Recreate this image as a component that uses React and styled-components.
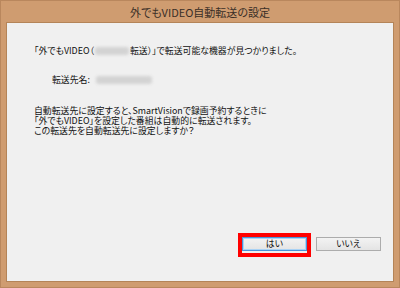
import React from "react";
import styled, { createGlobalStyle } from "styled-components";

const Global = createGlobalStyle`
  html, body { margin: 0; padding: 0; background: #cf9c70; }
  body { width: 400px; height: 288px; overflow: hidden; }
  * { box-sizing: border-box; }
`;

const Window = styled.div`
  width: 400px;
  height: 288px;
  background: #cf9c70;
  border: 1px solid #b9875d;
  display: flex;
  flex-direction: column;
  font-family: "Noto Sans CJK JP", "Noto Sans", sans-serif;
`;

const TitleBar = styled.div`
  height: 21px;
  display: flex;
  align-items: center;
  justify-content: center;
  font-size: 11px;
  color: #3a2f27;
  padding-top: 1px;
  font-feature-settings: "palt";
`;

const Client = styled.div`
  flex: 1;
  margin: 0 5px 5px 5px;
  background: #f0f0f0;
  border: 1px solid #b48458;
  display: flex;
  flex-direction: column;
  padding: 23px 12px 24px 27px;
  color: #111;
  font-size: 8.9px;
  font-feature-settings: "palt";
`;

const Line = styled.div`
  line-height: 10px;
  white-space: nowrap;
  display: flex;
  align-items: center;
  margin-left: ${(p) => p.$indent || 0}px;
  margin-top: ${(p) => p.$top || 0}px;
`;

const Paragraph = styled.div`
  margin-top: ${(p) => p.$top || 0}px;
  line-height: 10px;
  white-space: nowrap;
`;

const Blur = styled.span`
  display: inline-block;
  width: ${(p) => p.$w}px;
  height: 8px;
  background: #d3d3d3;
  filter: blur(1.4px);
  margin: 0 ${(p) => p.$gap || 0}px;
  border-radius: 3px;
`;

const Spacer = styled.div`
  flex: 1;
`;

const ButtonRow = styled.div`
  display: flex;
  justify-content: flex-end;
  align-items: flex-start;
  gap: 5px;
`;

const Highlight = styled.div`
  border: 4px solid #ff0000;
  padding: 0 0 2px 0;
  margin-top: -4px;
  display: flex;
`;

const Button = styled.button`
  width: 65px;
  height: 14px;
  padding: 0;
  margin: 0;
  font-family: "Noto Sans CJK JP", "Noto Sans", sans-serif;
  font-size: 8.9px;
  line-height: 12px;
  color: #111;
  border: 1px solid ${(p) => (p.$focused ? "#4a94d8" : "#acacac")};
  background: linear-gradient(#f3f3f3, #e4e4e4);
  box-shadow: ${(p) => (p.$focused ? "inset 0 0 0 1px #a9d2f5" : "none")};
  border-radius: 0;
  font-feature-settings: "palt";
`;

export default function App() {
  return (
    <>
      <Global />
      <Window>
        <TitleBar>外でもVIDEO自動転送の設定</TitleBar>
        <Client>
          <Line>
            「外でもVIDEO（<Blur $w={34} $gap={1} />転送）」で転送可能な機器が見つかりました。
          </Line>
          <Line $indent={18} $top={19}>
            転送先名:&nbsp;&nbsp;<Blur $w={56} $gap={2} />
          </Line>
          <Paragraph $top={21}>
            自動転送先に設定すると、SmartVisionで録画予約するときに
            <br />
            「外でもVIDEO」を設定した番組は自動的に転送されます。
            <br />
            この転送先を自動転送先に設定しますか？
          </Paragraph>
          <Spacer />
          <ButtonRow>
            <Highlight>
              <Button $focused>はい</Button>
            </Highlight>
            <Button>いいえ</Button>
          </ButtonRow>
        </Client>
      </Window>
    </>
  );
}
